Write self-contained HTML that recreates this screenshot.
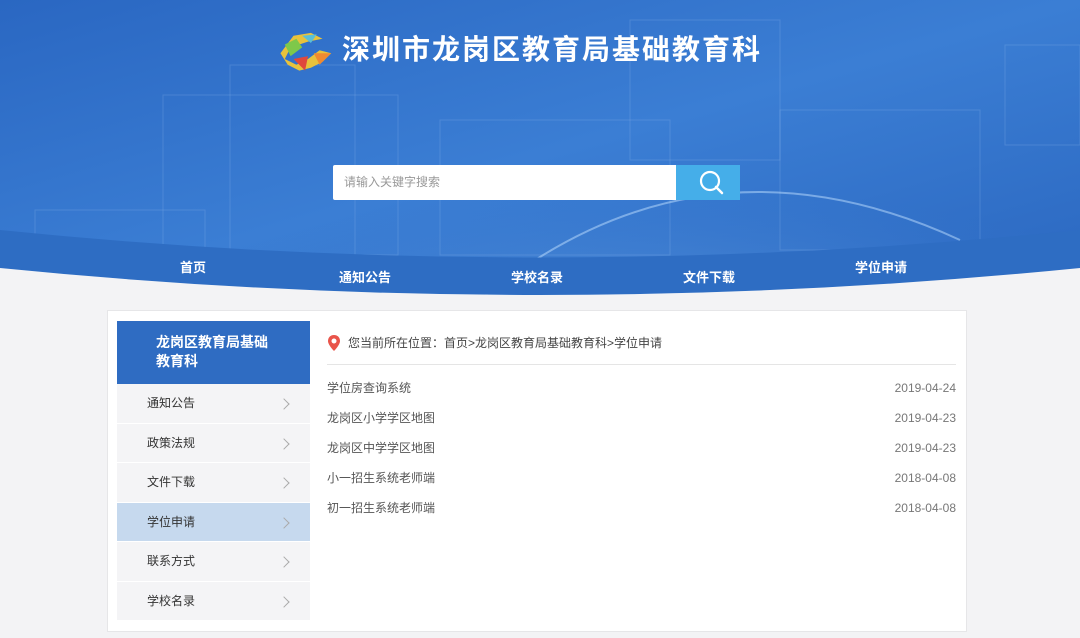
<!DOCTYPE html>
<html><head><meta charset="utf-8"><style>
*{margin:0;padding:0;box-sizing:border-box}
body{width:1080px;height:638px;overflow:hidden;background:#f3f3f5;font-family:"Liberation Sans","Noto Sans CJK SC",sans-serif;position:relative}
.abs{position:absolute}
.nav{position:absolute;color:#fff;font-size:13px;font-weight:bold}
.box{left:107px;top:310px;width:860px;height:322px;background:#fff;border:1px solid #e6e6e8}
.side{left:117px;top:321px;width:193px}
.sh{height:63px;background:#2f6cc2;color:#fff;font-size:14px;font-weight:bold;padding:12px 0 0 39px;line-height:19px}
.si{height:39.5px;background:#f4f4f6;border-bottom:1px solid #fff;font-size:12px;color:#333;padding-left:30px;line-height:39px;position:relative}
.si.on{background:#c6d9ee}
.si:after{content:"";position:absolute;right:22px;top:16px;width:7px;height:7px;border-top:1px solid #aaa;border-right:1px solid #aaa;transform:rotate(45deg)}
.row{position:absolute;left:327px;width:629px;font-size:12px;color:#555;height:18px;line-height:18px}
.row span{position:absolute;right:0;top:0;color:#777;line-height:18px}
</style></head><body>
<svg class="abs" style="left:0;top:0" width="1080" height="310">
<defs>
<linearGradient id="g" x1="0" y1="0" x2="1" y2="1"><stop offset="0" stop-color="#2a67c2"/><stop offset=".5" stop-color="#3b7ed4"/><stop offset="1" stop-color="#2a66bf"/></linearGradient>
<radialGradient id="r" cx="0.6" cy="1.1" r="0.5"><stop offset="0" stop-color="#7fb6ea" stop-opacity=".6"/><stop offset="1" stop-color="#3b7ed4" stop-opacity="0"/></radialGradient>
</defs>
<rect width="1080" height="310" fill="url(#g)"/>
<rect width="1080" height="310" fill="url(#r)"/>
<g fill="none" stroke="#8fb8ea" stroke-opacity=".25">
<rect x="163" y="95" width="235" height="160"/><rect x="230" y="65" width="125" height="195"/><rect x="440" y="120" width="230" height="135"/><rect x="630" y="20" width="150" height="140"/><rect x="780" y="110" width="200" height="140"/><rect x="1005" y="45" width="75" height="100"/><rect x="35" y="210" width="170" height="60"/>
<path d="M480 300 Q700 120 960 240" stroke="#bfe0ff" stroke-opacity=".5" stroke-width="2"/>
</g>
<path d="M0 230 Q540 285 1080 230 L1080 268 Q540 322 0 268Z" fill="#2e6dc3"/>
<path d="M0 268 Q540 322 1080 268 L1080 310 L0 310Z" fill="#f3f3f5"/>
<g transform="translate(279,30) scale(1.45)">
<path d="M10 4 L22 2 L30 6 L20 8 L8 12 L4 20 L12 24 L20 20 L28 14 L36 16 L30 22 L22 26 L14 28 L6 24 L1 16 Z" fill="#e8c23c"/>
<path d="M4 10 L12 6 L16 12 L8 18Z" fill="#7ec84a"/><path d="M10 20 L20 18 L18 28Z" fill="#e0483c"/><path d="M24 16 L36 16 L28 24Z" fill="#f08a30"/><path d="M16 4 L26 3 L22 9Z" fill="#5bbfd6"/>
</g>
</svg>
<div class="abs" style="left:342px;top:28px;color:#fff;font-size:28px;font-weight:bold;letter-spacing:2px">深圳市龙岗区教育局基础教育科</div>
<div class="abs" style="left:333px;top:165px;width:343px;height:35px;background:#fff;border-radius:2px 0 0 2px;font-size:12px;color:#999;line-height:35px;padding-left:11px">请输入关键字搜索</div>
<div class="abs" style="left:676px;top:165px;width:64px;height:35px;background:#45aee9">
<svg width="64" height="35"><circle cx="34" cy="16" r="9" fill="none" stroke="#fff" stroke-width="2.2"/><path d="M40 22 L46 28" stroke="#fff" stroke-width="2.5" stroke-linecap="round"/></svg></div>
<div class="nav" style="left:180px;top:257px">首页</div>
<div class="nav" style="left:339px;top:267px">通知公告</div>
<div class="nav" style="left:511px;top:267px">学校名录</div>
<div class="nav" style="left:683px;top:267px">文件下载</div>
<div class="nav" style="left:855px;top:257px">学位申请</div>
<div class="abs box"></div>
<div class="abs side">
<div class="sh">龙岗区教育局基础<br>教育科</div>
<div class="si">通知公告</div><div class="si">政策法规</div><div class="si">文件下载</div><div class="si on">学位申请</div><div class="si">联系方式</div><div class="si">学校名录</div>
</div>
<svg class="abs" style="left:327px;top:334px" width="14" height="18"><path d="M7 1 C3 1 1 4 1 7 C1 11 7 17 7 17 C7 17 13 11 13 7 C13 4 11 1 7 1Z" fill="#e9544a"/><circle cx="7" cy="7" r="2.5" fill="#fff"/></svg>
<div class="abs" style="left:348px;top:334px;font-size:12px;color:#444">您当前所在位置：首页&gt;龙岗区教育局基础教育科&gt;学位申请</div>
<div class="abs" style="left:327px;top:364px;width:629px;height:1px;background:#e5e5e5"></div>
<div class="row" style="top:379px">学位房查询系统<span>2019-04-24</span></div>
<div class="row" style="top:409px">龙岗区小学学区地图<span>2019-04-23</span></div>
<div class="row" style="top:439px">龙岗区中学学区地图<span>2019-04-23</span></div>
<div class="row" style="top:469px">小一招生系统老师端<span>2018-04-08</span></div>
<div class="row" style="top:499px">初一招生系统老师端<span>2018-04-08</span></div>
</body></html>
